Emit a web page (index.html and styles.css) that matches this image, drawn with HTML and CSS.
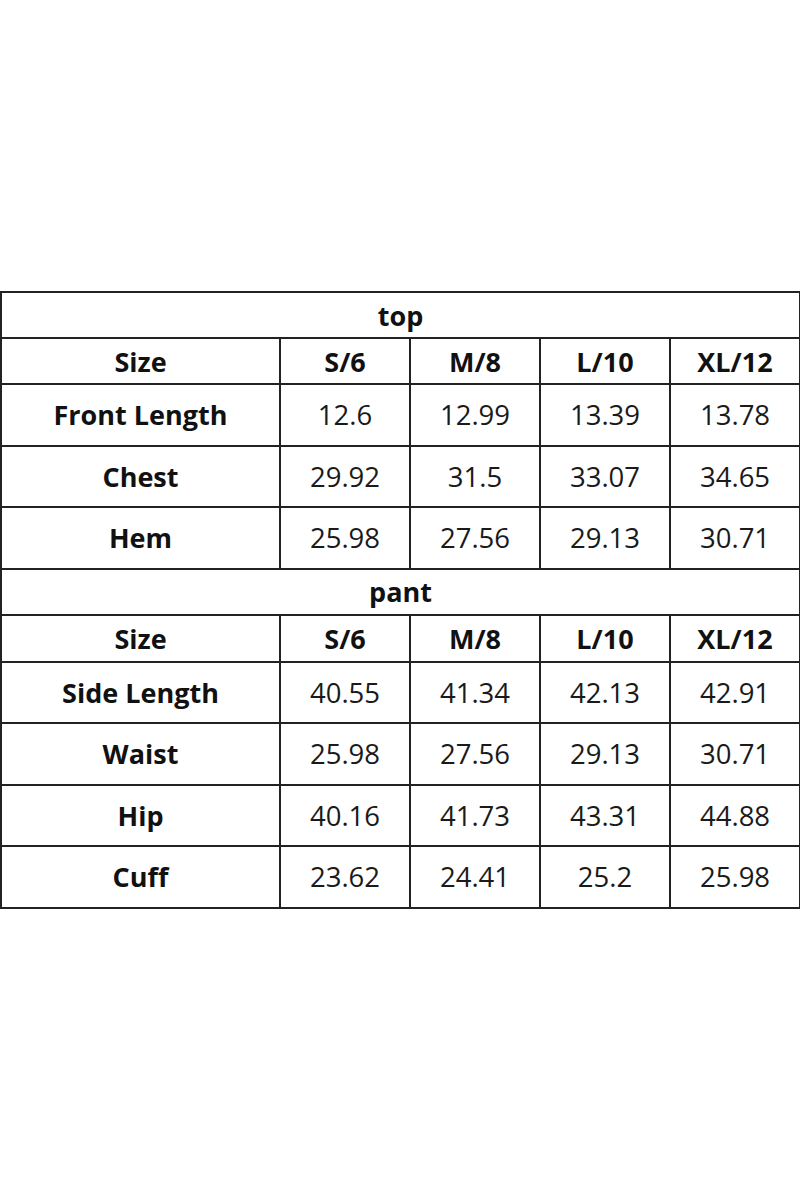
FILE: index.html
```html
<!DOCTYPE html>
<html>
<head>
<meta charset="utf-8">
<link rel="stylesheet" href="styles.css">
</head>
<body>
<div class="page">
<table class="chart">
  <colgroup>
    <col class="c-label"><col class="c-size"><col class="c-size"><col class="c-size"><col class="c-size">
  </colgroup>
  <tr class="section"><th colspan="5">top</th></tr>
  <tr class="head"><th>Size</th><th>S/6</th><th>M/8</th><th>L/10</th><th>XL/12</th></tr>
  <tr class="data"><th>Front Length</th><td>12.6</td><td>12.99</td><td>13.39</td><td>13.78</td></tr>
  <tr class="data"><th>Chest</th><td>29.92</td><td>31.5</td><td>33.07</td><td>34.65</td></tr>
  <tr class="data"><th>Hem</th><td>25.98</td><td>27.56</td><td>29.13</td><td>30.71</td></tr>
  <tr class="section"><th colspan="5">pant</th></tr>
  <tr class="head head-tall"><th>Size</th><th>S/6</th><th>M/8</th><th>L/10</th><th>XL/12</th></tr>
  <tr class="data"><th>Side Length</th><td>40.55</td><td>41.34</td><td>42.13</td><td>42.91</td></tr>
  <tr class="data"><th>Waist</th><td>25.98</td><td>27.56</td><td>29.13</td><td>30.71</td></tr>
  <tr class="data"><th>Hip</th><td>40.16</td><td>41.73</td><td>43.31</td><td>44.88</td></tr>
  <tr class="data"><th>Cuff</th><td>23.62</td><td>24.41</td><td>25.2</td><td>25.98</td></tr>
</table>
</div>
</body>
</html>
```
FILE: styles.css
```css
html, body {
  margin: 0;
  padding: 0;
  background: #ffffff;
}
.page {
  width: 800px;
  height: 1200px;
  padding-top: 291px;
  box-sizing: border-box;
}
.chart {
  border-collapse: collapse;
  width: 799px;
  table-layout: fixed;
  font-family: "Open Sans", "Noto Sans", sans-serif;
  color: #111;
}
.c-label { width: 279px; }
.c-size { width: 130px; }
.chart th, .chart td {
  border: 2px solid #222;
  text-align: center;
  vertical-align: middle;
  padding: 0;
  line-height: 1;
}
.chart th { font-weight: 700; font-size: 27px; }
.chart td { font-weight: 400; font-size: 27.5px; color: #1a1a1a; }
.section { height: 46px; }
.head { height: 46px; }
.head-tall { height: 47px; }
.data { height: 61.5px; }
```
